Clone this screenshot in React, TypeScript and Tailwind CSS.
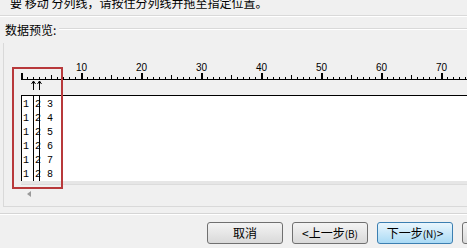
import React from 'react';

const rows = ['3', '4', '5', '6', '7', '8'];

function Ruler() {
  const ticks = Array.from({ length: 75 }, (_, i) => i);
  return (
    <svg width={463} height={52} viewBox="4 0 463 52" className="block">
      <line x1={21} y1={36.5} x2={467} y2={36.5} stroke="#000" strokeWidth={1} />
      {ticks.map((i) => {
        const x = 21 + i * 6;
        if (i % 10 === 0) {
          return <rect key={i} x={x} y={30} width={2} height={7} fill="#000" />;
        }
        const h = i % 5 === 0 ? 5 : 3;
        return <rect key={i} x={x} y={37 - h} width={1} height={h} fill="#000" />;
      })}
      {ticks
        .filter((i) => i % 10 === 0 && i > 0)
        .map((i) => (
          <text
            key={i}
            x={21 + i * 6 + 0.5}
            y={28}
            textAnchor="middle"
            fontSize={10}
            fontFamily="'Liberation Sans', Arial, sans-serif"
            fill="#000"
          >
            {i}
          </text>
        ))}
      {[33.5, 39.5].map((x) => (
        <g key={x} stroke="#000" strokeWidth={1} fill="none">
          <line x1={x} y1={38} x2={x} y2={47} />
          <path d={`M${x - 2} ${41} L${x} ${38} L${x + 2} ${41}`} />
        </g>
      ))}
    </svg>
  );
}

function Button({ children, focused }: { children?: React.ReactNode; focused?: boolean }) {
  return (
    <div
      className={
        focused
          ? 'w-[76px] h-[22px] shrink-0 rounded-[3px] border border-[#3c7fb1] bg-gradient-to-b from-[#eaf6fd] to-[#a9daf5] flex items-center justify-center text-[12px] text-black'
          : 'w-[76px] h-[22px] shrink-0 rounded-[3px] border border-[#707070] bg-gradient-to-b from-[#f4f4f4] to-[#d9d9d9] flex items-center justify-center text-[12px] text-black'
      }
    >
      {children}
    </div>
  );
}

export default function App() {
  return (
    <div
      className="relative w-[467px] h-[248px] overflow-hidden bg-[#f0f0f0] text-black"
      style={{ fontFamily: "'Noto Sans CJK SC', 'Noto Sans', sans-serif" }}
    >
      <div className="h-[15px] overflow-hidden">
        <div className="pl-[10px] mt-[-5px] text-[12px] leading-[16px] whitespace-nowrap">
          要 移动 分列线，请按住分列线并拖至指定位置。
        </div>
      </div>
      <div className="h-px bg-[#d9d9d9]" />
      <div className="h-px bg-white" />

      <div className="h-[26px] flex items-center pl-[5px] gap-[3px]">
        <span className="text-[12px] leading-[16px] whitespace-nowrap">数据预览:</span>
        <div className="flex-1 mt-[-2px]">
          <div className="h-px bg-[#d9d9d9]" />
          <div className="h-px bg-white" />
        </div>
      </div>

      <div className="ml-[3px] border-l border-b border-[#d9d9d9] h-[164px]">
        <Ruler />
        <div className="ml-[17px] h-[86px] relative bg-white border-l border-t border-black">
          <div
            className="pt-[2px] pl-[1px] text-[10px] leading-[14px] whitespace-pre"
            style={{ fontFamily: "'Liberation Mono', 'Courier New', monospace" }}
          >
            {rows.map((r) => (
              <div key={r}>{`1 2 ${r}`}</div>
            ))}
          </div>
          <div className="absolute left-[11px] top-0 bottom-0 w-px bg-black" />
          <div className="absolute left-[17px] top-0 bottom-0 w-px bg-black" />
        </div>
        <div className="ml-[17px] h-[4px] bg-[#e6e6e6] border-b border-[#dcdcdc]" />
        <div className="pl-[23px] pt-[6px]">
          <svg width={5} height={6} className="block">
            <path d="M4 0 L0 3 L4 6 Z" fill="#9a9a9a" />
          </svg>
        </div>
      </div>

      <div className="mt-[6px] h-px bg-[#d5d5d5]" />
      <div className="h-px bg-white" />

      <div className="mt-[7px] flex gap-[9px] pl-[207px]">
        <Button>取消</Button>
        <Button>
          &lt;上一步<span className="text-[10px]">(B)</span>
        </Button>
        <Button focused>
          下一步<span className="text-[10px]">(N)</span>&gt;
        </Button>
        <Button />
      </div>

      <div className="absolute left-[12px] top-[67px] w-[51px] h-[122px] border-2 border-[#b8393b]" />
    </div>
  );
}
